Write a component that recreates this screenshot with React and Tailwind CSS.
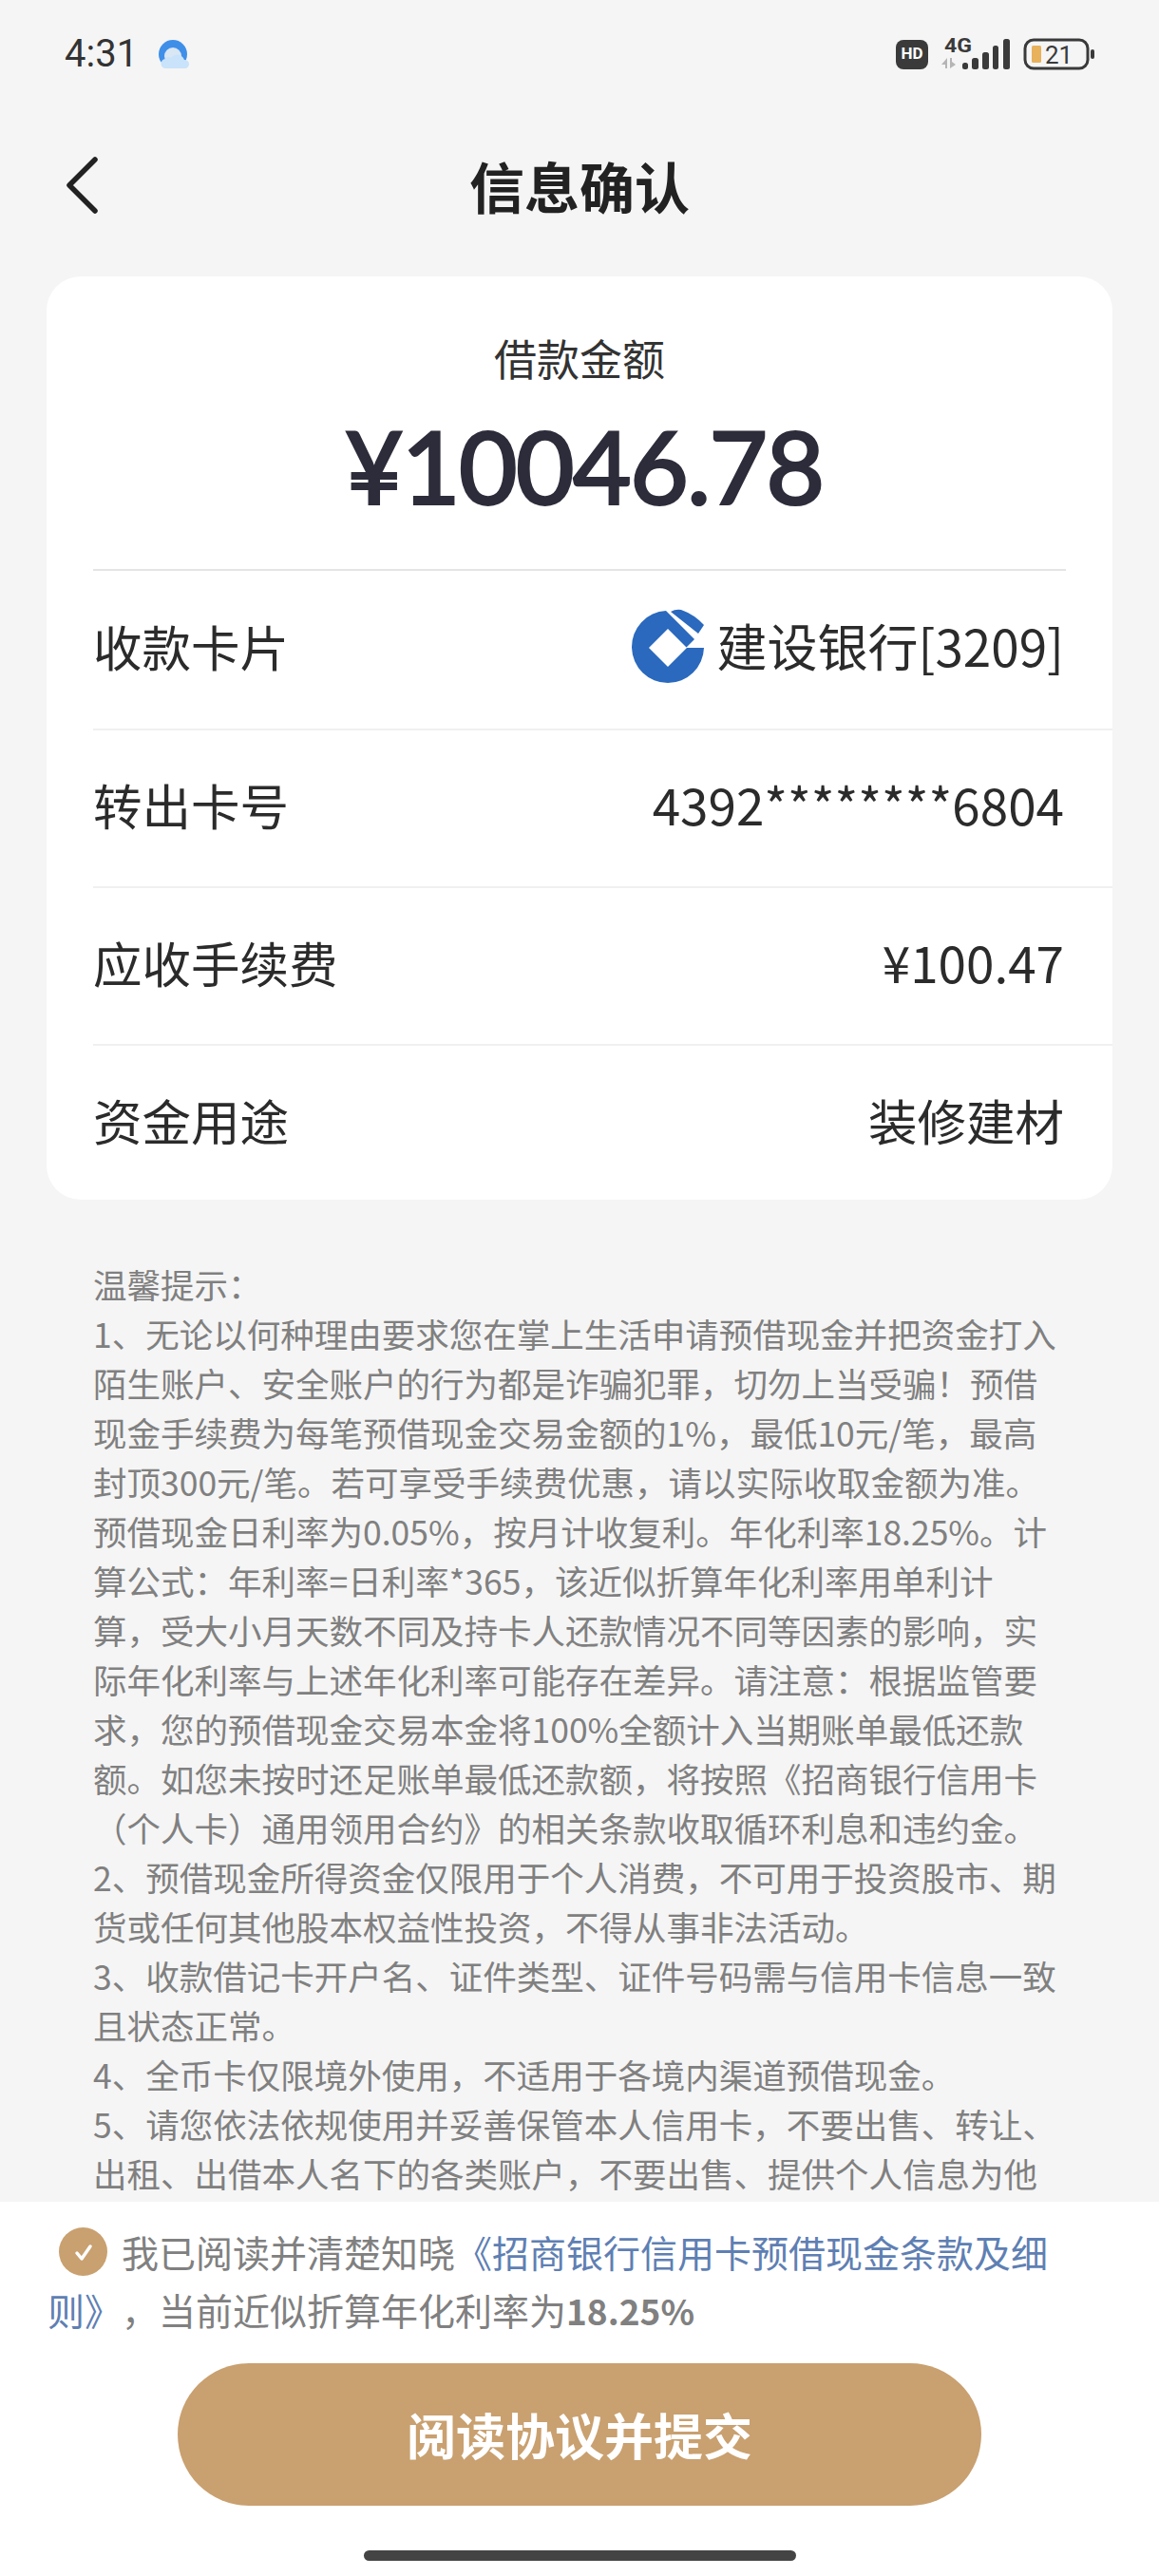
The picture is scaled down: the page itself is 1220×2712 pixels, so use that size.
const FONT = "font-['Noto_Sans_CJK_SC','Noto_Sans',sans-serif]"

const hintLines = [
  '温馨提示：',
  '1、无论以何种理由要求您在掌上生活申请预借现金并把资金打入',
  '陌生账户、安全账户的行为都是诈骗犯罪，切勿上当受骗！预借',
  '现金手续费为每笔预借现金交易金额的1%，最低10元/笔，最高',
  '封顶300元/笔。若可享受手续费优惠，请以实际收取金额为准。',
  '预借现金日利率为0.05%，按月计收复利。年化利率18.25%。计',
  '算公式：年利率=日利率*365，该近似折算年化利率用单利计',
  '算，受大小月天数不同及持卡人还款情况不同等因素的影响，实',
  '际年化利率与上述年化利率可能存在差异。请注意：根据监管要',
  '求，您的预借现金交易本金将100%全额计入当期账单最低还款',
  '额。如您未按时还足账单最低还款额，将按照《招商银行信用卡',
  '（个人卡）通用领用合约》的相关条款收取循环利息和违约金。',
  '2、预借现金所得资金仅限用于个人消费，不可用于投资股市、期',
  '货或任何其他股本权益性投资，不得从事非法活动。',
  '3、收款借记卡开户名、证件类型、证件号码需与信用卡信息一致',
  '且状态正常。',
  '4、全币卡仅限境外使用，不适用于各境内渠道预借现金。',
  '5、请您依法依规使用并妥善保管本人信用卡，不要出售、转让、',
  '出租、出借本人名下的各类账户，不要出售、提供个人信息为他',
]

function WeatherIcon() {
  return (
    <svg width="34" height="32" viewBox="0 0 34 32">
      <circle cx="16" cy="16" r="15" fill="#3f8fe8" />
      <circle cx="16" cy="18" r="9" fill="#d9e6f3" />
      <path d="M9 31a5 5 0 0 1-1-10 4 4 0 0 1 6-1 8 8 0 0 1 14 2 4.500 4.500 0 0 1 1 9z" fill="#c8e3fa" />
    </svg>
  )
}

function SignalIcon() {
  return (
    <svg width="72" height="34" viewBox="0 0 72 34" className="overflow-visible">
      <text x="3" y="15" fontSize="21" fontWeight="700" fill="#3a3a3a" textLength="29" lengthAdjust="spacingAndGlyphs" fontFamily="Roboto, sans-serif">4G</text>
      <path d="M0 28l6-7v11h-2v-4zM9 32V21h2v4l4 3-6 4z" fill="#b5b5b5" />
      <rect x="22" y="26" width="6" height="7" rx="2.500" fill="#3a3a3a" />
      <rect x="32" y="21" width="7" height="12" rx="2.500" fill="#3a3a3a" />
      <rect x="43" y="15" width="7" height="18" rx="2.500" fill="#3a3a3a" />
      <rect x="54" y="8" width="6" height="25" rx="2.500" fill="#3a3a3a" />
      <rect x="65" y="1" width="7" height="32" rx="2.500" fill="#3a3a3a" />
    </svg>
  )
}

function BatteryIcon() {
  return (
    <svg width="76" height="34" viewBox="0 0 76 34">
      <rect x="2" y="2" width="66" height="30" rx="9" fill="none" stroke="#3a3a3a" strokeWidth="3" />
      <rect x="9" y="8" width="10" height="18" rx="1.500" fill="#e8b15c" />
      <text x="23" y="27" fontSize="26" fill="#3a3a3a" fontFamily="Roboto, sans-serif">21</text>
      <rect x="71" y="12" width="4" height="10" rx="2" fill="#3a3a3a" />
    </svg>
  )
}

function BankLogo() {
  return (
    <svg width="76" height="78" viewBox="0 0 76 78">
      <path d="M36 2 A38 38 0 1 0 76 41 H57 L66 32 Z" fill="#2a69bd" />
      <path d="M38 21 L58 41 L38 61 L18 41 Z" fill="#fff" />
      <path d="M41 3 Q46 0 52 1 Q66 6 76 17 L70 26 Z" fill="#2a69bd" />
    </svg>
  )
}

function Row({ label, first, children }) {
  return (
    <div className={`ml-[49px] h-[166px] pb-[8px] flex items-center justify-between pr-[51px] ${first ? 'border-t-0' : 'border-t-2 border-[#f0f0f0]'}`}>
      <span className="text-[51.500px] text-[#2b2b2b]">{label}</span>
      {children}
    </div>
  )
}

export default function App() {
  return (
    <div className={`${FONT} [text-spacing-trim:space-all] w-[1220px] h-[2712px] bg-[#f5f5f5] flex flex-col overflow-hidden`}>
      <div className="h-[114px] px-[68px] flex items-center justify-between shrink-0">
        <div className="flex items-center gap-[21px]">
          <span className="text-[40px] text-[#333] font-['Roboto',sans-serif]">4:31</span>
          <WeatherIcon />
        </div>
        <div className="flex items-center gap-[14px] -mr-[1px]">
          <span className="w-[34px] h-[31px] rounded-[8px] bg-[#3a3a3a] text-white text-[17px] font-bold flex items-center justify-center font-['Roboto',sans-serif]">HD</span>
          <SignalIcon />
          <BatteryIcon />
        </div>
      </div>

      <div className="h-[162px] shrink-0 px-[68px] grid grid-cols-[100px_1fr_100px] items-center">
        <svg width="36" height="60" viewBox="0 0 36 60" fill="none" stroke="#222" strokeWidth="5.500" strokeLinecap="round" strokeLinejoin="round">
          <path d="M32 3 L5 30 L32 57" />
        </svg>
        <h1 className="text-center text-[58px] font-bold text-[#222] leading-none">信息确认</h1>
      </div>

      <div className="mt-[15px] mx-[49px] h-[972px] shrink-0 bg-white rounded-[36px] overflow-hidden">
        <div className="h-[308px] flex flex-col items-center">
          <div className="mt-[55px] text-[45px] leading-[62px] text-[#333]">借款金额</div>
          <div className="mt-[24px] ml-[9px] text-[107px] leading-[116px] font-medium tracking-[-2px] [-webkit-text-stroke:2px_#2d2c3a] text-[#2d2c3a] font-['Lato',sans-serif]">¥10046.78</div>
        </div>
        <div className="mx-[49px] h-[2px] bg-[#e4e4e4]" />
        <Row label="收款卡片" first>
          <div className="flex items-center gap-[14px]">
            <BankLogo />
            <span className="text-[53px] text-[#2b2b2b]">建设银行[3209]</span>
          </div>
        </Row>
        <Row label="转出卡号">
          <span className="text-[53px] text-[#2b2b2b]">4392********6804</span>
        </Row>
        <Row label="应收手续费">
          <span className="text-[53px] text-[#2b2b2b]">¥100.47</span>
        </Row>
        <Row label="资金用途">
          <span className="text-[51.500px] text-[#2b2b2b]">装修建材</span>
        </Row>
      </div>

      <div className="flex-1 min-h-0 overflow-hidden mt-[63px] pl-[98px] text-[35.500px] leading-[52px] text-[#808080]">
        {hintLines.map((line, i) => (
          <div key={i} className="whitespace-nowrap">{line}</div>
        ))}
      </div>

      <div className="h-[394px] shrink-0 bg-white">
        <div className="px-[50px] pt-[22px] text-[39px] leading-[61px] text-[#808080]">
          <div className="flex items-center whitespace-nowrap">
            <span className="ml-[12px] mr-[15px] w-[51px] h-[51px] rounded-full bg-[#c9a06f] flex items-center justify-center shrink-0">
              <svg width="24" height="24" viewBox="0 0 24 24" fill="none" stroke="#fff" strokeWidth="3.500" strokeLinecap="round" strokeLinejoin="round">
                <path d="M5 13 L10 19 L19 6" />
              </svg>
            </span>
            <span>我已阅读并清楚知晓</span>
            <span className="text-[#5f7fb3]">《招商银行信用卡预借现金条款及细</span>
          </div>
          <div className="whitespace-nowrap">
            <span className="text-[#5f7fb3]">则》</span>，当前近似折算年化利率为<span className="font-bold text-[37px]">18.25%</span>
          </div>
        </div>
        <button className="block mx-auto mt-[25px] w-[846px] h-[150px] rounded-full bg-[#c9a06f] text-white text-[52px] font-bold">阅读协议并提交</button>
        <div className="mx-auto mt-[47px] w-[455px] h-[11px] rounded-full bg-[#444]" />
      </div>
    </div>
  )
}
